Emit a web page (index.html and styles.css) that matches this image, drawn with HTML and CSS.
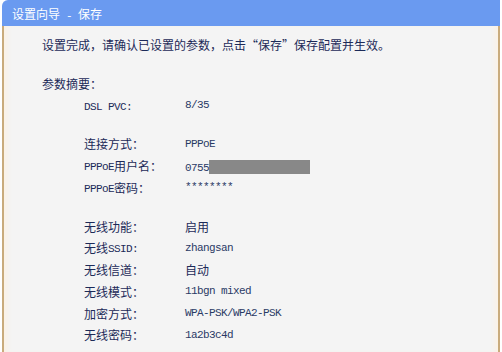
FILE: index.html
```html
<!DOCTYPE html>
<html lang="zh-CN">
<head>
    <meta charset="UTF-8">
    <title>设置向导 - 保存</title>
    <link rel="stylesheet" href="styles.css">
</head>
<body>
    <div class="title-bar">设置向导<span class="en"> - </span>保存</div>
    <div class="panel">
        <p class="intro">设置完成，请确认已设置的参数，点击“保存”保存配置并生效。</p>
        <p class="summary-head">参数摘要：</p>

        <div class="group">
            <div class="row"><span class="label"><span class="en">DSL PVC:</span></span><span class="value en">8/35</span></div>
        </div>

        <div class="group">
            <div class="row"><span class="label">连接方式：</span><span class="value en">PPPoE</span></div>
            <div class="row"><span class="label"><span class="en">PPPoE</span>用户名：</span><span class="value"><span class="en">0755</span><span class="masked"></span></span></div>
            <div class="row"><span class="label"><span class="en">PPPoE</span>密码：</span><span class="value en">********</span></div>
        </div>

        <div class="group">
            <div class="row"><span class="label">无线功能：</span><span class="value">启用</span></div>
            <div class="row"><span class="label">无线<span class="en">SSID:</span></span><span class="value en">zhangsan</span></div>
            <div class="row"><span class="label">无线信道：</span><span class="value">自动</span></div>
            <div class="row"><span class="label">无线模式：</span><span class="value en">11bgn mixed</span></div>
            <div class="row"><span class="label">加密方式：</span><span class="value en">WPA-PSK/WPA2-PSK</span></div>
            <div class="row"><span class="label">无线密码：</span><span class="value en">1a2b3c4d</span></div>
        </div>
    </div>
</body>
</html>
```

FILE: styles.css
```css
body {
    margin: 0;
    padding: 0;
    background-color: #ffffff;
    font-family: "Noto Sans CJK SC", sans-serif;
    font-size: 12px;
    color: #1c2a58;
}

.en {
    font-family: "Liberation Mono", "DejaVu Sans Mono", monospace;
    font-size: 11px;
    letter-spacing: -0.6px;
}

.label .en {
    vertical-align: 1px;
}

.title-bar {
    margin: 0 2px;
    height: 26px;
    line-height: 28px;
    padding-left: 10px;
    background-color: #6a9af0;
    border-top-left-radius: 6px;
    color: #fff;
}

.panel {
    margin: 0 2px;
    height: 326px;
    padding: 8px 0 0 38px;
    box-sizing: border-box;
    background-color: #f4f4f4;
    border-left: 2px solid #c9ab7c;
    border-right: 2px solid #c9ab7c;
    box-shadow: inset 6px 0 6px -4px #fdf0e0, inset -6px 0 6px -4px #fdf0e0;
}

.intro {
    margin: 0 0 18px 0;
    line-height: 22px;
}

.summary-head {
    margin: 0;
    line-height: 20px;
}

.group {
    padding-left: 42px;
    margin-bottom: 17px;
}

.row {
    display: flex;
    align-items: center;
    height: 21.75px;
}

.group:first-of-type .row {
    height: 22px;
}

.label {
    width: 101px;
    flex-shrink: 0;
}

.value .en,
.value.en {
    color: #2a3a66;
}

.masked {
    display: inline-block;
    width: 101px;
    height: 14px;
    background-color: #888888;
    vertical-align: middle;
}
```
